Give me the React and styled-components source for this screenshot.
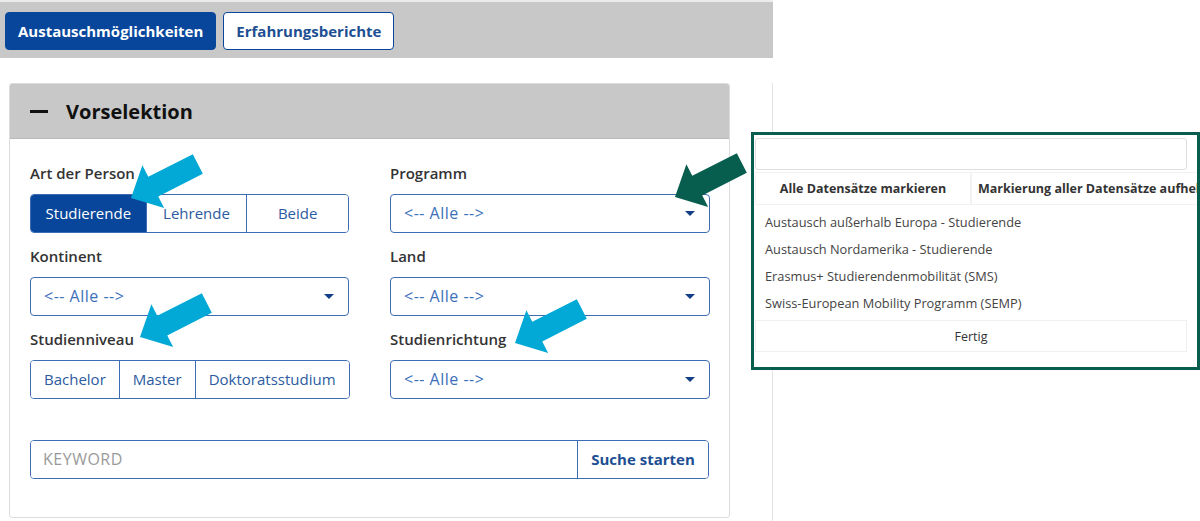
import styled, { createGlobalStyle } from "styled-components";

const GlobalStyle = createGlobalStyle`
  html, body {
    margin: 0;
    padding: 0;
    background: #fff;
  }
  body {
    font-family: "Open Sans", "Liberation Sans", sans-serif;
  }
  * {
    box-sizing: border-box;
  }
`;

const BLUE = "#07469b";
const LINE = "#3d6cb3";

export default function App() {
  return (
    <>
      <GlobalStyle />
      <Page>
        <TopBar>
          <TabButton $active>Austauschmöglichkeiten</TabButton>
          <TabButton>Erfahrungsberichte</TabButton>
        </TopBar>

        <Content>
          <MainCol>
            <Panel>
              <PanelHeader>
                <Minus />
                <PanelTitle>Vorselektion</PanelTitle>
              </PanelHeader>

              <PanelBody>
                <Grid>
                  <Field>
                    <Label>Art der Person</Label>
                    <Group>
                      <GroupButton $active $w={115}>
                        Studierende
                      </GroupButton>
                      <GroupButton $w={101}>Lehrende</GroupButton>
                      <GroupButton $w={102}>Beide</GroupButton>
                    </Group>
                  </Field>

                  <Field>
                    <Label>Programm</Label>
                    <Select>
                      <span>&lt;-- Alle --&gt;</span>
                      <Caret />
                    </Select>
                  </Field>

                  <Field>
                    <Label>Kontinent</Label>
                    <Select>
                      <span>&lt;-- Alle --&gt;</span>
                      <Caret />
                    </Select>
                  </Field>

                  <Field>
                    <Label>Land</Label>
                    <Select>
                      <span>&lt;-- Alle --&gt;</span>
                      <Caret />
                    </Select>
                  </Field>

                  <Field>
                    <Label>Studienniveau</Label>
                    <Group $inline>
                      <GroupButton>Bachelor</GroupButton>
                      <GroupButton>Master</GroupButton>
                      <GroupButton>Doktoratsstudium</GroupButton>
                    </Group>
                  </Field>

                  <Field>
                    <Label>Studienrichtung</Label>
                    <Select>
                      <span>&lt;-- Alle --&gt;</span>
                      <Caret />
                    </Select>
                  </Field>
                </Grid>

                <SearchRow>
                  <KeywordInput placeholder="KEYWORD" />
                  <SearchButton>Suche starten</SearchButton>
                </SearchRow>
              </PanelBody>
            </Panel>
          </MainCol>
          <SideCol />
        </Content>

        <PopupFrame>
          <Dropdown>
            <DropSearch />
            <DropActions>
              <DropAction>Alle Datensätze markieren</DropAction>
              <DropAction $left>Markierung aller Datensätze aufheben</DropAction>
            </DropActions>
            <DropList>
              <DropItem>Austausch außerhalb Europa - Studierende</DropItem>
              <DropItem>Austausch Nordamerika - Studierende</DropItem>
              <DropItem>Erasmus+ Studierendenmobilität (SMS)</DropItem>
              <DropItem>Swiss-European Mobility Programm (SEMP)</DropItem>
            </DropList>
            <DropDone>Fertig</DropDone>
          </Dropdown>
        </PopupFrame>

        <Arrows viewBox="0 0 1200 521">
          <Arrow x={131} y={198} color="#03a9d6" />
          <Arrow x={140} y={337} color="#03a9d6" />
          <Arrow x={515} y={343} color="#03a9d6" />
          <Arrow x={675} y={197} color="#075e4f" />
        </Arrows>
      </Page>
    </>
  );
}

function Arrow({ x, y, color }) {
  return (
    <polygon
      transform={`translate(${x} ${y}) rotate(153)`}
      points="0,0 -25,-24 -25,-11 -75,-11 -75,11 -25,11 -25,24"
      fill={color}
    />
  );
}

const Page = styled.div`
  position: relative;
  width: 1200px;
  height: 521px;
  overflow: hidden;
  display: flex;
  flex-direction: column;
`;

const TopBar = styled.div`
  width: 773px;
  height: 58px;
  border-top: 2px solid #ececec;
  background: #c8c8c8;
  display: flex;
  gap: 7px;
  padding: 10px 0 0 5px;
  align-items: flex-start;
`;

const TabButton = styled.button`
  height: 38px;
  padding: 0 12px;
  border-radius: 4px;
  border: 1.5px solid ${BLUE};
  background: ${(p) => (p.$active ? BLUE : "#fff")};
  color: ${(p) => (p.$active ? "#fff" : "#1e4f92")};
  font-family: inherit;
  font-weight: 700;
  font-size: 15px;
`;

const Content = styled.div`
  flex: 1;
  display: flex;
  margin-top: 25px;
`;

const MainCol = styled.div`
  width: 772px;
  padding-left: 9px;
`;

const SideCol = styled.div`
  flex: 1;
  border-left: 1px solid #e4e4e4;
`;

const Panel = styled.div`
  width: 721px;
  height: 435px;
  border: 1px solid #dcdcdc;
  border-radius: 3px;
  overflow: hidden;
`;

const PanelHeader = styled.div`
  height: 55px;
  background: #c8c8c8;
  border-bottom: 1px solid #b9b9b9;
  display: flex;
  align-items: center;
  padding-left: 20px;
  gap: 18px;
`;

const Minus = styled.span`
  width: 18px;
  height: 3px;
  background: #111;
`;

const PanelTitle = styled.span`
  font-size: 20px;
  font-weight: 700;
  color: #111;
`;

const PanelBody = styled.div`
  padding: 23px 20px 0 20px;
`;

const Grid = styled.div`
  display: grid;
  grid-template-columns: 319px 320px;
  column-gap: 41px;
  row-gap: 12.5px;
`;

const Field = styled.div`
  display: flex;
  flex-direction: column;
  align-items: flex-start;
`;

const Label = styled.div`
  font-size: 15px;
  line-height: 22px;
  font-weight: 600;
  color: #333;
  margin-bottom: 10px;
`;

const Group = styled.div`
  display: flex;
  height: 38.5px;
  width: ${(p) => (p.$inline ? "auto" : "100%")};
  border: 1.5px solid ${LINE};
  border-radius: 4px;
  overflow: hidden;
`;

const GroupButton = styled.div`
  ${(p) => (p.$w ? `width: ${p.$w}px;` : "padding: 0 13px;")}
  display: flex;
  align-items: center;
  justify-content: center;
  font-size: 15px;
  color: ${(p) => (p.$active ? "#fff" : "#2c5b9f")};
  background: ${(p) => (p.$active ? BLUE : "#fff")};
  & + & {
    border-left: 1.5px solid ${LINE};
  }
`;

const Select = styled.div`
  width: 100%;
  height: 38.5px;
  border: 1.5px solid ${LINE};
  border-radius: 4px;
  display: flex;
  align-items: center;
  justify-content: space-between;
  padding: 0 14px 0 13px;
  font-size: 16px;
  letter-spacing: 0.5px;
  color: #3d70ba;
`;

const Caret = styled.span`
  width: 0;
  height: 0;
  border-left: 5px solid transparent;
  border-right: 5px solid transparent;
  border-top: 5px solid #123f85;
`;

const SearchRow = styled.div`
  display: flex;
  height: 39px;
  margin-top: 41px;
  border: 1.5px solid ${LINE};
  border-radius: 4px;
  overflow: hidden;
`;

const KeywordInput = styled.input`
  flex: 1;
  border: none;
  outline: none;
  padding: 0 12px;
  font-family: inherit;
  font-size: 16px;
  letter-spacing: 0.5px;
  color: #333;
  &::placeholder {
    color: #9a9a9a;
  }
`;

const SearchButton = styled.button`
  width: 131px;
  border: none;
  border-left: 1.5px solid ${LINE};
  background: #fff;
  font-family: inherit;
  font-weight: 700;
  font-size: 15px;
  color: #1e4f92;
`;

const PopupFrame = styled.div`
  position: absolute;
  left: 751px;
  top: 132px;
  width: 449px;
  height: 238px;
  border: 3px solid #075e4f;
  background: #fff;
  overflow: hidden;
`;

const Dropdown = styled.div`
  width: 432px;
  margin: 3px 0 0 1px;
  font-family: "Open Sans", "Liberation Sans", sans-serif;
  color: #444;
`;

const DropSearch = styled.div`
  height: 32px;
  border: 1px solid #dedede;
  border-radius: 3px;
`;

const DropActions = styled.div`
  display: flex;
  height: 33px;
  margin-top: 2px;
`;

const DropAction = styled.div`
  flex: 0 0 216px;
  display: flex;
  align-items: center;
  justify-content: ${(p) => (p.$left ? "flex-start" : "center")};
  padding-left: ${(p) => (p.$left ? "6px" : "0")};
  white-space: nowrap;
  font-size: 12.5px;
  font-weight: 700;
  color: #333;
  border: 1px solid #f2f2f2;
`;

const DropList = styled.div`
  padding: 4px 0 3px;
`;

const DropItem = styled.div`
  height: 27px;
  line-height: 27px;
  padding-left: 10px;
  font-size: 12.8px;
  color: #444;
`;

const DropDone = styled.div`
  height: 32px;
  display: flex;
  align-items: center;
  justify-content: center;
  font-size: 12.5px;
  color: #333;
  border: 1px solid #f0f0f0;
`;

const Arrows = styled.svg`
  position: absolute;
  left: 0;
  top: 0;
  width: 1200px;
  height: 521px;
  pointer-events: none;
`;
